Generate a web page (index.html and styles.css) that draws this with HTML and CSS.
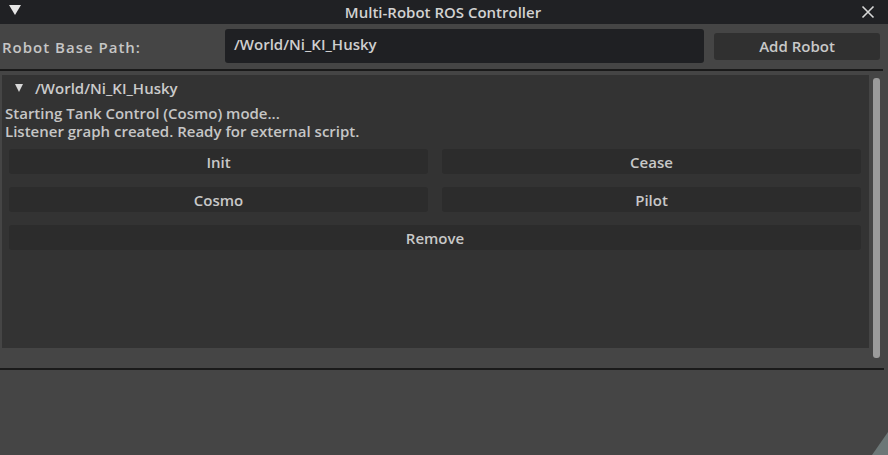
FILE: index.html
```html
<!DOCTYPE html>
<html>
<head>
<meta charset="utf-8">
<link rel="stylesheet" href="styles.css">
</head>
<body>
<div class="window">
  <div class="titlebar">
    <span class="tri-title"></span>
    <span class="title">Multi-Robot ROS Controller</span>
    <svg class="close" width="14" height="14" viewBox="0 0 14 14"><path d="M1.5 1.5 L12.5 12.5 M12.5 1.5 L1.5 12.5" stroke="#d8d8d8" stroke-width="1.6" fill="none"/></svg>
  </div>
  <div class="toolbar">
    <span class="label">Robot Base Path:</span>
    <div class="input">/World/Ni_KI_Husky</div>
    <div class="btn add">Add Robot</div>
  </div>
  <div class="sep"></div>
  <div class="scrollarea">
    <div class="frame">
      <div class="frame-header"><span class="tri-small"></span><span>/World/Ni_KI_Husky</span></div>
      <div class="log">
        <div>Starting Tank Control (Cosmo) mode...</div>
        <div>Listener graph created. Ready for external script.</div>
      </div>
      <div class="grid">
        <div class="btn">Init</div>
        <div class="btn">Cease</div>
        <div class="btn">Cosmo</div>
        <div class="btn">Pilot</div>
        <div class="btn wide">Remove</div>
      </div>
    </div>
    <div class="scrollbar"></div>
  </div>
  <div class="sep bottom"></div>
</div>
<div class="corner"></div>
</body>
</html>
```
FILE: styles.css
```css
html, body {
  margin: 0;
  padding: 0;
  width: 888px;
  height: 455px;
  overflow: hidden;
  background: #454545;
  font-family: "Open Sans", "Noto Sans", sans-serif;
  font-weight: 600;
  color: #c9c9c9;
  font-size: 15px;
  position: relative;
}
.titlebar {
  height: 24px;
  background: #202124;
  display: flex;
  align-items: center;
  justify-content: center;
  position: relative;
}
.tri-title {
  position: absolute;
  left: 9px;
  top: 5px;
  width: 0;
  height: 0;
  border-left: 6.5px solid transparent;
  border-right: 6.5px solid transparent;
  border-top: 10px solid #e6e6e6;
}
.title {
  font-size: 15px;
  color: #d2d2d2;
  margin-left: -2px;
}
.close {
  position: absolute;
  right: 13px;
  top: 5px;
}
.toolbar {
  height: 45px;
  display: flex;
  align-items: center;
  padding: 0 8px 0 2px;
}
.label {
  width: 223px;
  font-size: 15px;
  letter-spacing: 1px;
  color: #c6c6c6;
  padding-top: 1px;
}
.input {
  width: 470px;
  height: 34px;
  background: #1f2023;
  border-radius: 3px;
  padding-left: 9px;
  margin-top: -1px;
  display: flex;
  align-items: flex-start;
  line-height: 30px;
  font-size: 15px;
  color: #cfcfcf;
}
.btn {
  background: #2c2c2c;
  border-radius: 3px;
  display: flex;
  align-items: center;
  justify-content: center;
  height: 25px;
  color: #c8c8c8;
}
.btn.add {
  width: 166px;
  height: 27px;
  margin-left: 10px;
  margin-top: -1px;
  background: #303030;
}
.sep {
  height: 2px;
  background: #1a1a1a;
  margin-right: 5px;
}
.scrollarea {
  display: flex;
  padding-top: 4px;
  height: 293px;
}
.frame {
  width: 867px;
  margin-left: 2px;
  height: 273px;
  background: #333333;
  box-sizing: border-box;
  padding: 0 8px 0 7px;
}
.frame-header {
  height: 26px;
  display: flex;
  align-items: center;
  color: #cbcbcb;
  padding-left: 8px;
  margin-left: -7px;
}
.tri-small {
  width: 0;
  height: 0;
  border-left: 4.5px solid transparent;
  border-right: 4.5px solid transparent;
  border-top: 8px solid #d8d8d8;
  margin-right: 12px;
  margin-left: 5px;
}
.log {
  margin-left: -4px;
  margin-top: 3px;
  line-height: 18px;
  color: #c6c6c6;
}
.grid {
  display: grid;
  grid-template-columns: 1fr 1fr;
  column-gap: 14px;
  row-gap: 13px;
  margin-top: 9px;
}
.wide {
  grid-column: 1 / 3;
}
.scrollbar {
  width: 7px;
  height: 280px;
  margin-top: 3px;
  margin-left: 4px;
  background: #9b9b9b;
  border-radius: 3px;
}
.sep.bottom {
  margin-right: 4px;
}
.corner {
  position: absolute;
  right: 0;
  bottom: 0;
  width: 0;
  height: 0;
  border-left: 16px solid transparent;
  border-bottom: 23px solid #6c7777;
}
```
